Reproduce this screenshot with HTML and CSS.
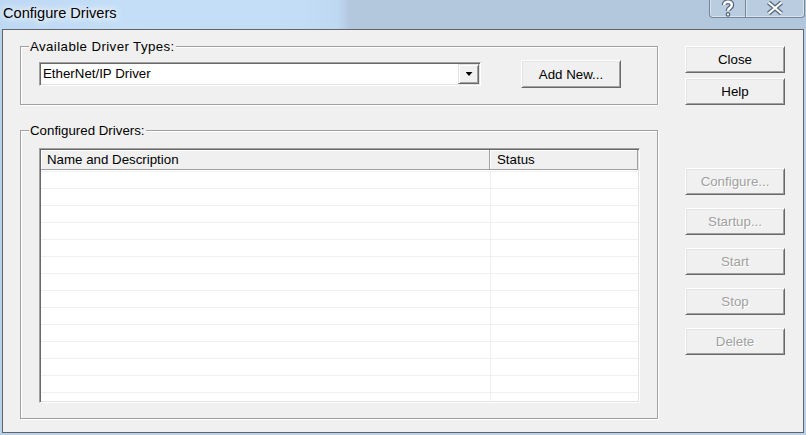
FILE: index.html
```html
<!DOCTYPE html>
<html>
<head>
<meta charset="utf-8">
<title>Configure Drivers</title>
<link rel="stylesheet" href="styles.css">
</head>
<body>
<div class="window">
  <div class="titlebar">
    <span class="title">Configure Drivers</span>
    <div class="caption-buttons">
      <div class="cap-btn cap-help">
        <svg width="16" height="17" viewBox="0 0 16 17">
          <path d="M4.2 5 C4.2 0.6 11.8 0.6 11.8 5 C11.8 8 8 8 8 10.8" fill="none" stroke="#56667a" stroke-width="5"/>
          <circle cx="8" cy="14.4" r="2.3" fill="#56667a"/>
          <path d="M4.2 5 C4.2 0.6 11.8 0.6 11.8 5 C11.8 8 8 8 8 10.8" fill="none" stroke="#ffffff" stroke-width="2.4"/>
          <circle cx="8" cy="14.4" r="1.1" fill="#ffffff"/>
        </svg>
      </div>
      <div class="cap-btn cap-close">
        <svg width="18" height="14" viewBox="0 0 18 14">
          <path d="M2.5 1.5 L15.5 12.5 M15.5 1.5 L2.5 12.5" fill="none" stroke="#56667a" stroke-width="4.6"/>
          <path d="M2.5 1.5 L15.5 12.5 M15.5 1.5 L2.5 12.5" fill="none" stroke="#ffffff" stroke-width="2.2"/>
        </svg>
      </div>
    </div>
  </div>
  <div class="client">
    <div class="main">
      <div class="group group-types">
        <div class="group-title group-title-wide">Available Driver Types:</div>
        <div class="types-row">
          <div class="combo">
            <span class="combo-text">EtherNet/IP Driver</span>
            <span class="combo-btn"><span class="arrow"></span></span>
          </div>
          <button class="btn btn-add">Add New...</button>
        </div>
      </div>
      <div class="group group-drivers">
        <div class="group-title">Configured Drivers:</div>
        <div class="list">
          <div class="list-header">
            <div class="hcell hname">Name and Description</div>
            <div class="hcell hstatus">Status</div>
          </div>
          <div class="list-body">
            <div class="row"><div class="cell-name"></div><div class="cell-status"></div></div>
            <div class="row"><div class="cell-name"></div><div class="cell-status"></div></div>
            <div class="row"><div class="cell-name"></div><div class="cell-status"></div></div>
            <div class="row"><div class="cell-name"></div><div class="cell-status"></div></div>
            <div class="row"><div class="cell-name"></div><div class="cell-status"></div></div>
            <div class="row"><div class="cell-name"></div><div class="cell-status"></div></div>
            <div class="row"><div class="cell-name"></div><div class="cell-status"></div></div>
            <div class="row"><div class="cell-name"></div><div class="cell-status"></div></div>
            <div class="row"><div class="cell-name"></div><div class="cell-status"></div></div>
            <div class="row"><div class="cell-name"></div><div class="cell-status"></div></div>
            <div class="row"><div class="cell-name"></div><div class="cell-status"></div></div>
            <div class="row"><div class="cell-name"></div><div class="cell-status"></div></div>
            <div class="row"><div class="cell-name"></div><div class="cell-status"></div></div>
            <div class="row"><div class="cell-name"></div><div class="cell-status"></div></div>
          </div>
        </div>
      </div>
    </div>
    <div class="side">
      <button class="btn">Close</button>
      <button class="btn btn-help">Help</button>
      <button class="btn btn-disabled btn-first-disabled" disabled>Configure...</button>
      <button class="btn btn-disabled btn-next" disabled>Startup...</button>
      <button class="btn btn-disabled btn-next" disabled>Start</button>
      <button class="btn btn-disabled btn-next" disabled>Stop</button>
      <button class="btn btn-disabled btn-next" disabled>Delete</button>
    </div>
  </div>
</div>
</body>
</html>
```

FILE: styles.css
```css
html, body {
  margin: 0;
  padding: 0;
}

body {
  width: 806px;
  height: 435px;
  overflow: hidden;
  font-family: "Liberation Sans", Arial, sans-serif;
  font-size: 13.3px;
  color: #000;
}

.window {
  width: 806px;
  height: 435px;
  display: flex;
  flex-direction: column;
  background: #b9d1ea;
}

/* ---------- title bar ---------- */
.titlebar {
  height: 29px;
  flex-shrink: 0;
  display: flex;
  align-items: flex-start;
  background: linear-gradient(90deg, #bcd8f4 0px, #c4def7 120px, #c3ddf7 300px, #bed8f2 338px, #b3c7dd 350px, #b2c6dc 806px);
}

.title {
  padding-left: 3px;
  font-family: "Liberation Sans", Arial, sans-serif;
  font-size: 14.6px;
  line-height: 27px;
  color: #000;
  text-shadow: 0 0 6px #fff, 0 0 10px rgba(255, 255, 255, 0.9), 0 0 14px rgba(255, 255, 255, 0.7);
}

.caption-buttons {
  margin-left: auto;
  margin-right: 1px;
  width: 96px;
  height: 18px;
  box-sizing: border-box;
  display: flex;
  border: 1px solid #75869b;
  border-top: none;
  border-radius: 0 0 4px 4px;
  box-shadow: inset 1px 0 0 rgba(255, 255, 255, 0.45), inset -1px -1px 0 rgba(255, 255, 255, 0.45);
  background: rgba(200, 214, 230, 0.35);
}

.cap-btn {
  display: flex;
  justify-content: center;
  align-items: flex-start;
}

.cap-help {
  width: 35px;
  padding-left: 1px;
  box-sizing: border-box;
}

.cap-close {
  flex: 1;
  border-left: 1px solid #75869b;
  box-shadow: inset 1px 0 0 rgba(255, 255, 255, 0.45);
  padding-top: 1px;
}

/* ---------- client area ---------- */
.client {
  flex: 1;
  margin: 0 2px 2px 2px;
  border: 1px solid #646464;
  background: #f0f0f0;
  display: flex;
  align-items: flex-start;
  padding: 16px 0 0 17px;
}

.main {
  width: 638px;
  display: flex;
  flex-direction: column;
}

.group {
  box-sizing: border-box;
  border: 1px solid #a0a0a0;
  box-shadow: inset 1px 1px 0 #fff, 1px 1px 0 #fff;
  padding: 0 0 0 18px;
}

.group-types {
  height: 59px;
}

.group-drivers {
  height: 289px;
  margin-top: 25px;
}

.group-title {
  width: max-content;
  height: 15px;
  line-height: 15px;
  margin: -8px 0 0 -10px;
  padding: 0 1px;
  background: #f0f0f0;
  font-size: 13.3px;
}

.group-title-wide {
  letter-spacing: 0.4px;
}

.types-row {
  display: flex;
  align-items: center;
  height: 28px;
  margin-top: 6px;
}

/* ---------- combo box ---------- */
.combo {
  box-sizing: border-box;
  width: 442px;
  height: 24px;
  padding: 1px;
  display: flex;
  background: #fff;
  border: 1px solid;
  border-color: #a0a0a0 #fff #fff #a0a0a0;
  box-shadow: inset 1px 1px 0 #696969, inset -1px -1px 0 #e3e3e3;
}

.combo-text {
  flex: 1;
  padding-left: 2px;
  line-height: 20px;
  font-size: 13.3px;
}

.combo-btn {
  box-sizing: border-box;
  width: 21px;
  height: 20px;
  display: flex;
  justify-content: center;
  align-items: center;
  background: #f0f0f0;
  border: 1px solid;
  border-color: #e3e3e3 #696969 #696969 #e3e3e3;
  box-shadow: inset 1px 1px 0 #fff, inset -1px -1px 0 #a0a0a0;
}

.arrow {
  width: 7px;
  height: 4px;
  background: #000;
  clip-path: polygon(0 0, 100% 0, 50% 100%);
  margin-left: 1px;
}

/* ---------- buttons ---------- */
.btn {
  box-sizing: border-box;
  width: 100px;
  height: 27px;
  padding: 0;
  margin: 0;
  background: #f0f0f0;
  font-family: "Liberation Sans", Arial, sans-serif;
  font-size: 13.3px;
  font-weight: 400;
  color: #000;
  border: 1px solid;
  border-color: #fff #696969 #696969 #fff;
  box-shadow: inset 1px 1px 0 #e3e3e3, inset -1px -1px 0 #a0a0a0;
  border-radius: 0;
  outline: none;
  flex-shrink: 0;
}

.btn-add {
  margin-left: 40px;
  height: 28px;
}

.btn-help {
  margin-top: 5px;
}

.btn-disabled {
  color: #a0a0a0;
  text-shadow: 1px 1px 0 #fff;
}

.btn-first-disabled {
  margin-top: 63px;
}

.btn-next {
  margin-top: 13px;
}

.side {
  margin-left: 27px;
  width: 100px;
  display: flex;
  flex-direction: column;
}

/* ---------- list view ---------- */
.list {
  box-sizing: border-box;
  margin-top: 10px;
  width: 601px;
  height: 255px;
  padding: 1px;
  display: flex;
  flex-direction: column;
  background: #fff;
  border: 1px solid;
  border-color: #a0a0a0 #fff #fff #a0a0a0;
  box-shadow: inset 1px 1px 0 #696969, inset -1px -1px 0 #e3e3e3;
  overflow: hidden;
}

.list-header {
  display: flex;
  height: 20px;
  flex-shrink: 0;
}

.hcell {
  box-sizing: border-box;
  height: 20px;
  line-height: 19px;
  background: #f0f0f0;
  border-right: 1px solid #a0a0a0;
  border-bottom: 1px solid #a0a0a0;
  box-shadow: inset 1px 1px 0 #fff;
  font-size: 13.3px;
  white-space: nowrap;
}

.hname {
  width: 449px;
  padding-left: 6px;
}

.hstatus {
  width: 148px;
  padding-left: 7px;
}

.list-body {
  flex: 1;
  padding-top: 1px;
  overflow: hidden;
}

.row {
  box-sizing: border-box;
  height: 17px;
  display: flex;
  border-top: 1px solid #f0f0f0;
}

.cell-name {
  box-sizing: border-box;
  width: 450px;
  border-right: 1px solid #f0f0f0;
}

.cell-status {
  flex: 1;
}
```
